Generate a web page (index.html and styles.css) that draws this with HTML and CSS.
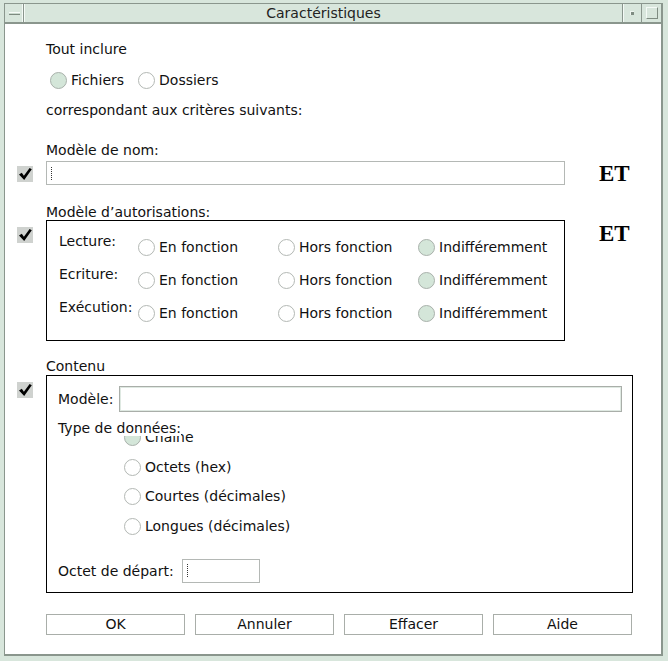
FILE: index.html
```html
<!DOCTYPE html>
<html lang="fr">
<head>
<meta charset="utf-8">
<title>Caractéristiques</title>
<link rel="stylesheet" href="styles.css">
</head>
<body>
<div class="window">
  <div class="inner">
    <div class="titlebar">
      <div class="tb-btn tb-menu"><span class="dash"></span></div>
      <div class="tb-title">Caractéristiques</div>
      <div class="tb-btn tb-min"><span class="dot"></span></div>
      <div class="tb-btn tb-max"><span class="sq"></span></div>
    </div>
    <div class="content">
      <div class="intro">
        <div class="text">Tout inclure</div>
        <div class="radio-row">
          <label class="opt"><span class="radio on"></span>Fichiers</label>
          <label class="opt"><span class="radio"></span>Dossiers</label>
        </div>
        <div class="text crit-intro">correspondant aux critères suivants:</div>
      </div>

      <div class="text section-label name-label">Modèle de nom:</div>
      <div class="crit-row">
        <span class="check"><svg width="16" height="16" viewBox="0 0 16 16"><rect width="16" height="16" fill="#cfd2cf"/><path d="M2 8.5 L4.8 6.8 L6.9 9.8 L12.6 2 L14.8 3.3 L7.2 14 Z" fill="#000"/></svg></span>
        <div class="field name-field"><span class="caret"></span></div>
        <div class="et et-name">ET</div>
      </div>

      <div class="text section-label perm-label">Modèle d’autorisations:</div>
      <div class="crit-row">
        <span class="check check-top"><svg width="16" height="16" viewBox="0 0 16 16"><rect width="16" height="16" fill="#cfd2cf"/><path d="M2 8.5 L4.8 6.8 L6.9 9.8 L12.6 2 L14.8 3.3 L7.2 14 Z" fill="#000"/></svg></span>
        <div class="perm-box">
          <div class="perm-row">
            <span class="perm-name">Lecture:</span>
            <label class="opt perm-opt"><span class="radio"></span>En fonction</label>
            <label class="opt perm-opt"><span class="radio"></span>Hors fonction</label>
            <label class="opt perm-opt"><span class="radio on"></span>Indifféremment</label>
          </div>
          <div class="perm-row">
            <span class="perm-name">Ecriture:</span>
            <label class="opt perm-opt"><span class="radio"></span>En fonction</label>
            <label class="opt perm-opt"><span class="radio"></span>Hors fonction</label>
            <label class="opt perm-opt"><span class="radio on"></span>Indifféremment</label>
          </div>
          <div class="perm-row">
            <span class="perm-name">Exécution:</span>
            <label class="opt perm-opt"><span class="radio"></span>En fonction</label>
            <label class="opt perm-opt"><span class="radio"></span>Hors fonction</label>
            <label class="opt perm-opt"><span class="radio on"></span>Indifféremment</label>
          </div>
        </div>
        <div class="et et-perm">ET</div>
      </div>

      <div class="text section-label content-label">Contenu</div>
      <div class="crit-row wide">
        <span class="check check-top"><svg width="16" height="16" viewBox="0 0 16 16"><rect width="16" height="16" fill="#cfd2cf"/><path d="M2 8.5 L4.8 6.8 L6.9 9.8 L12.6 2 L14.8 3.3 L7.2 14 Z" fill="#000"/></svg></span>
        <div class="content-box">
          <div class="model-row">
            <span class="text">Modèle:</span>
            <div class="field model-field"></div>
          </div>
          <div class="text type-label">Type de données:</div>
          <div class="type-list">
            <label class="opt"><span class="radio on"></span>Chaîne</label>
            <label class="opt"><span class="radio"></span>Octets (hex)</label>
            <label class="opt"><span class="radio"></span>Courtes (décimales)</label>
            <label class="opt"><span class="radio"></span>Longues (décimales)</label>
          </div>
          <div class="start-row">
            <span class="text">Octet de départ:</span>
            <div class="field start-field"><span class="caret"></span></div>
          </div>
        </div>
      </div>

      <div class="buttons">
        <button class="btn">OK</button>
        <button class="btn">Annuler</button>
        <button class="btn">Effacer</button>
        <button class="btn">Aide</button>
      </div>
    </div>
  </div>
</div>
</body>
</html>
```

FILE: styles.css
```css
* { box-sizing: border-box; }
html, body { margin: 0; padding: 0; }
body {
  width: 668px;
  height: 661px;
  background: #d8e6dc;
  font-family: "DejaVu Sans", "Noto Sans", sans-serif;
  font-size: 14px;
  color: #111;
}
.window {
  width: 668px;
  height: 661px;
  padding: 3px 5px 5px 4px;
  background: #d8e6dc;
  display: flex;
}
.inner {
  flex: 1;
  display: flex;
  flex-direction: column;
  border: 1px solid #8a968d;
  border-right: 2px solid #8a968d;
  border-bottom: 2px solid #8a968d;
}
.titlebar {
  height: 20px;
  display: flex;
  background: #d8e6dc;
  border-bottom: 2px solid #8a968d;
}
.tb-btn {
  display: flex;
  align-items: center;
  justify-content: center;
}
.tb-menu {
  width: 19px;
  border-right: 1px solid #8a968d;
  box-shadow: inset -1px 0 0 #f4faf6;
}
.dash {
  display: block;
  width: 11px;
  height: 3px;
  border-top: 1px solid #f7fbf8;
  border-bottom: 1px solid #7d8a80;
  background: #cad9ce;
}
.tb-title {
  flex: 1;
  text-align: center;
  line-height: 18px;
  font-size: 14px;
  color: #222;
  border-left: 1px solid #f4faf6;
}
.tb-min {
  width: 19px;
  border-left: 1px solid #8a968d;
  box-shadow: inset 1px 0 0 #f4faf6;
}
.dot {
  display: block;
  width: 4px;
  height: 4px;
  background: #7f8c82;
  border-top: 1px solid #eef5f0;
  border-left: 1px solid #eef5f0;
}
.tb-max {
  width: 20px;
  border-left: 1px solid #8a968d;
}
.sq {
  display: block;
  width: 12px;
  height: 12px;
  border: 1px solid #7f8c82;
  border-top-color: #f4faf6;
  border-left-color: #f4faf6;
}
.content {
  flex: 1;
  background: #fff;
  padding: 17px 0 0 12px;
}
.text { line-height: 16px; }
.intro { padding-left: 29px; }
.radio-row {
  display: flex;
  gap: 14px;
  margin: 14px 0 0 4px;
  height: 18px;
  align-items: center;
}
.opt {
  display: inline-flex;
  align-items: center;
  gap: 4px;
  line-height: 17px;
  white-space: nowrap;
}
.radio {
  display: inline-block;
  width: 17px;
  height: 17px;
  border-radius: 50%;
  border: 1px solid #b3b8b4;
  background: #fff;
  flex: none;
}
.radio.on { background: #d4e6d9; border-color: #a9b1ab; }
.crit-intro { margin-top: 13px; }
.section-label { padding-left: 29px; }
.name-label { margin-top: 24px; }
.crit-row {
  display: grid;
  grid-template-columns: 29px 519px 1fr;
  align-items: start;
}
.crit-row.wide { grid-template-columns: 29px 587px; }
.check { display: block; width: 16px; height: 16px; }
.check svg { display: block; }
.crit-row > .check:first-child { margin-top: 5px; }
.crit-row > .check-top:first-child { margin-top: 7px; }
.name-label + .crit-row { margin-top: 3px; }
.field {
  border: 1px solid #b4b8b5;
  background: #fff;
  display: flex;
  align-items: center;
}
.name-field { height: 24px; padding-left: 4px; }
.caret {
  display: block;
  width: 1px;
  height: 13px;
  border-left: 1px dotted #333;
}
.et {
  font-family: "Liberation Serif", "Times New Roman", serif;
  font-weight: bold;
  font-size: 23px;
  line-height: 26px;
  padding-left: 34px;
  color: #000;
}
.et-perm { margin-top: 1px; }
.perm-label { margin-top: 17px; }
.perm-box {
  border: 1px solid #000;
  padding: 12px 0 8px 12px;
}
.perm-row {
  display: grid;
  grid-template-columns: 79px 140px 140px 1fr;
  height: 33px;
  align-items: start;
}
.perm-name { line-height: 16px; }
.perm-opt { margin-top: 6px; }
.content-label { margin-top: 17px; }
.content-label + .crit-row { margin-top: 1px; }
.content-box {
  border: 1px solid #000;
  padding: 10px 10px 9px 11px;
}
.model-row {
  display: flex;
  align-items: center;
  gap: 6px;
}
.model-field {
  flex: 1;
  height: 26px;
  border: 1px solid #a9aea9;
  box-shadow: inset 0 0 0 1px #dfe9e2;
}
.type-label {
  margin-top: 8px;
  position: relative;
  z-index: 1;
  display: inline-block;
  background: #fff;
}
.type-list {
  display: flex;
  flex-direction: column;
  align-items: flex-start;
  gap: 12.5px;
  margin: -7px 0 0 66px;
}
.start-row {
  display: flex;
  align-items: center;
  gap: 8px;
  margin-top: 24px;
}
.start-field { width: 78px; height: 24px; padding-left: 4px; }
.buttons {
  display: flex;
  gap: 10px;
  margin: 21px 0 0 29px;
}
.btn {
  width: 139px;
  height: 21px;
  border: 1px solid #a9aea9;
  background: #fff;
  font-family: "DejaVu Sans", "Noto Sans", sans-serif;
  font-size: 14px;
  color: #111;
  padding: 0;
  line-height: 19px;
}
```
